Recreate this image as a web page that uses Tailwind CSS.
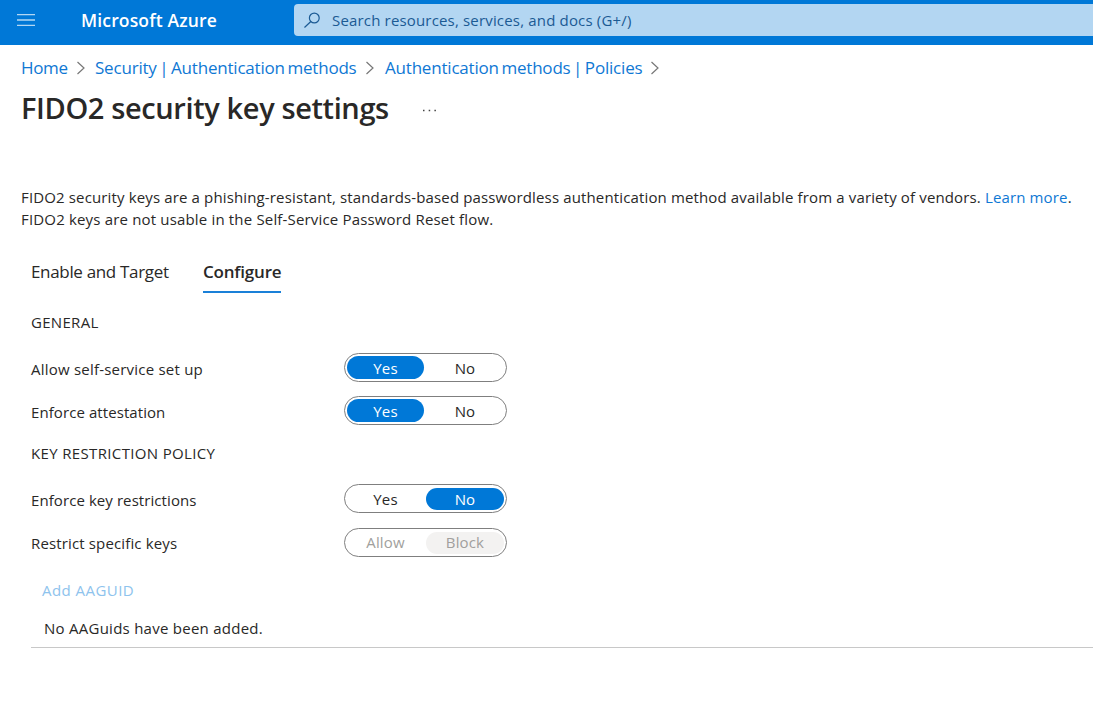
<!DOCTYPE html>
<html lang="en">
<head>
<meta charset="utf-8">
<title>FIDO2 security key settings - Microsoft Azure</title>
<script src="https://cdn.jsdelivr.net/npm/@tailwindcss/browser@4"></script>
</head>
<body class="h-[717px] overflow-hidden bg-white font-['Open_Sans','Noto_Sans',sans-serif] text-[15px] leading-[22px] tracking-[0.14px] text-[#292827] whitespace-nowrap">
<header class="flex h-[45px] bg-[#0078d7] pt-1">
  <svg class="ml-[17px] mt-[8px] h-[18px] w-[18px] shrink-0" viewBox="0 0 18 18" stroke="#b3d7f3" stroke-width="1.3"><path d="M0 2.7h18M0 8h18M0 13.3h18"/></svg>
  <div class="ml-[46px] w-[213px] shrink-0 text-[17.5px] leading-8 font-semibold tracking-[0.15px] text-white">Microsoft Azure</div>
  <div class="flex h-8 flex-1 items-center rounded-l-sm bg-[#b3d6f2] pl-[10px] text-[#1b5a94]">
    <svg class="h-4 w-4 shrink-0" viewBox="0 0 16 16" fill="none" stroke="currentColor" stroke-width="1.2"><circle cx="10.3" cy="6" r="4.9"/><path d="M6.8 9.5L.5 15.5"/></svg>
    <span class="ml-3 tracking-[0.17px]">Search resources, services, and docs (G+/)</span>
  </div>
</header>
<main>
  <nav class="flex h-[46px] items-center pl-[21px] text-[17px] tracking-[-0.2px] [word-spacing:-1.6px] text-[#0f78d4]">
    <a class="w-[56px] tracking-[-0.35px]">Home</a>
    <svg class="h-[14px] w-2" viewBox="0 0 8 14" fill="none" stroke="#777" stroke-width="1.2"><path d="M.5 1l6.5 6L.5 13"/></svg>
    <a class="ml-[10px] w-[271px]">Security | Authentication methods</a>
    <svg class="h-[14px] w-2" viewBox="0 0 8 14" fill="none" stroke="#777" stroke-width="1.2"><path d="M.5 1l6.5 6L.5 13"/></svg>
    <a class="ml-[11px] w-[266px]">Authentication methods | Policies</a>
    <svg class="h-[14px] w-2" viewBox="0 0 8 14" fill="none" stroke="#777" stroke-width="1.2"><path d="M.5 1l6.5 6L.5 13"/></svg>
  </nav>
  <div class="flex h-[95px] pl-[21px]">
    <h1 class="-mt-px w-[401px] text-[29px] leading-9 font-semibold tracking-[-0.38px]">FIDO2 security key settings</h1>
    <svg class="mt-[18px] h-[3px] w-[15px]" viewBox="0 0 15 3" fill="#444"><path d="M1 .8h1.5v1.5H1zM6.7.8h1.5v1.5H6.7zM12.4.8h1.5v1.5h-1.5z"/></svg>
  </div>
  <p class="h-[75px] pl-[21px]">FIDO2 security keys are a phishing-resistant, standards-based passwordless authentication method available from a variety of vendors. <a class="text-[#0f78d4]">Learn more</a>.<br><span class="tracking-[0.17px]">FIDO2 keys are not usable in the Self-Service Password Reset flow.</span></p>
  <div class="flex h-[50px] items-start pl-[31px] text-[17px] tracking-[-0.33px]">
    <div class="w-[172px]">Enable and Target</div>
    <div class="h-8 w-[78px] border-b-2 border-[#1a80d8] font-semibold tracking-[-0.2px]">Configure</div>
  </div>
  <section class="pl-[31px]">
    <h2 class="h-[42px] tracking-[0.3px]">GENERAL</h2>
    <div class="flex h-[43px]">
      <div class="w-[313px] pt-[5px] tracking-[0.22px]">Allow self-service set up</div>
      <div class="flex h-[29px] w-[163px] items-center justify-between rounded-full border border-[#7f7f7f] px-[2px] text-center">
        <span class="h-[23px] w-[77px] rounded-full bg-[#0078d7] leading-[24px] text-white">Yes</span><span class="w-[78px] leading-[24px]">No</span>
      </div>
    </div>
    <div class="flex h-[46px]">
      <div class="w-[313px] pt-[5px] tracking-[0.08px]">Enforce attestation</div>
      <div class="flex h-[29px] w-[163px] items-center justify-between rounded-full border border-[#7f7f7f] px-[2px] text-center">
        <span class="h-[23px] w-[77px] rounded-full bg-[#0078d7] leading-[24px] text-white">Yes</span><span class="w-[78px] leading-[24px]">No</span>
      </div>
    </div>
  </section>
  <section class="pl-[31px]">
    <h2 class="h-[42px] tracking-[0.35px]">KEY RESTRICTION POLICY</h2>
    <div class="flex h-[44px]">
      <div class="w-[313px] pt-[5px] tracking-[0.08px]">Enforce key restrictions</div>
      <div class="flex h-[29px] w-[163px] items-center justify-between rounded-full border border-[#7f7f7f] px-[2px] text-center">
        <span class="w-[77px]">Yes</span><span class="h-[22px] w-[78px] rounded-full bg-[#0078d7] text-white">No</span>
      </div>
    </div>
    <div class="flex h-[51px] text-[#a19f9d]">
      <div class="w-[313px] pt-[4px] text-[#292827]">Restrict specific keys</div>
      <div class="flex h-[29px] w-[163px] items-center justify-between rounded-full border border-[#7f7f7f] px-[2px] text-center leading-[21px]">
        <span class="w-[77px]">Allow</span><span class="h-[22px] w-[78px] rounded-full bg-[#f3f2f1]">Block</span>
      </div>
    </div>
    <div class="h-[38px] pl-[11px] tracking-[0.45px] text-[#8ec3ed]">Add AAGUID</div>
    <div class="h-[31px] border-b border-[#c8c8c8] pl-[13px] tracking-[0.26px]">No AAGuids have been added.</div>
  </section>
</main>
</body>
</html>
